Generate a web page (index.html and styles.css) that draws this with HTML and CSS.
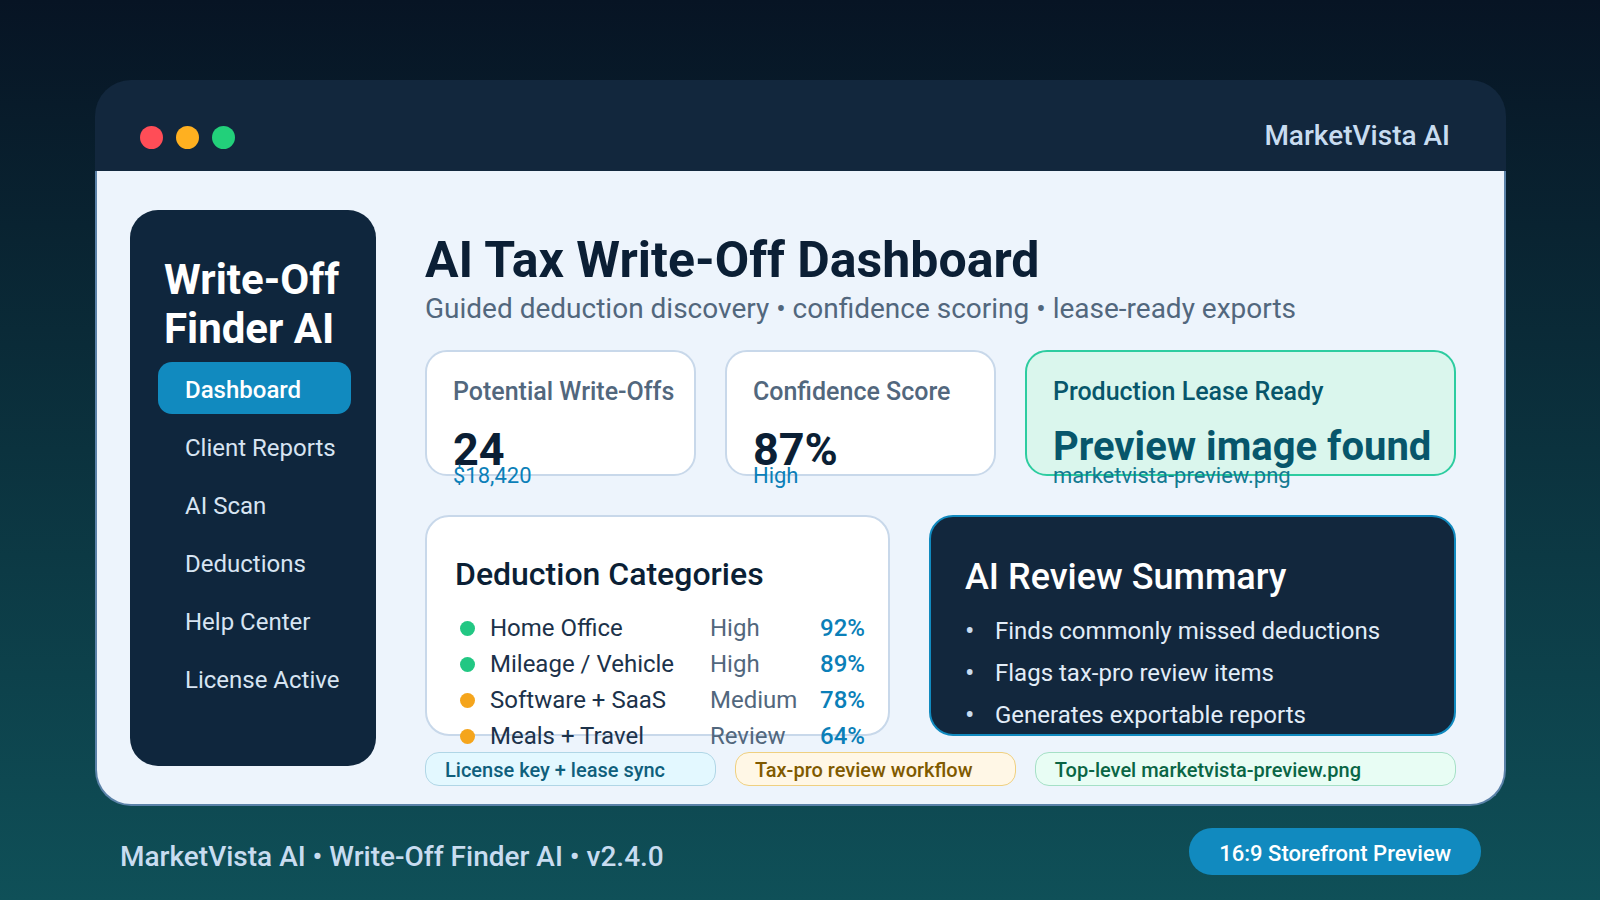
FILE: index.html
```html
<!DOCTYPE html>
<html lang="en">
<head>
    <meta charset="UTF-8">
    <meta name="viewport" content="width=device-width, initial-scale=1.0">
    <title>Write-Off Finder AI</title>
    <link rel="stylesheet" href="styles.css">
</head>
<body>
    <div class="window">
        <header class="titlebar">
            <div class="lights">
                <span class="light red"></span>
                <span class="light yellow"></span>
                <span class="light green"></span>
            </div>
            <span class="brand">MarketVista AI</span>
        </header>
        <div class="content">
            <aside class="sidebar">
                <h2>Write-Off<br>Finder AI</h2>
                <nav>
                    <a href="#" class="active">Dashboard</a>
                    <a href="#">Client Reports</a>
                    <a href="#">AI Scan</a>
                    <a href="#">Deductions</a>
                    <a href="#">Help Center</a>
                    <a href="#">License Active</a>
                </nav>
            </aside>
            <main class="main">
                <h1>AI Tax Write-Off Dashboard</h1>
                <p class="subtitle">Guided deduction discovery • confidence scoring • lease-ready exports</p>

                <section class="cards">
                    <div class="card">
                        <div class="label">Potential Write-Offs</div>
                        <div class="value">24</div>
                        <div class="note">$18,420</div>
                    </div>
                    <div class="card">
                        <div class="label">Confidence Score</div>
                        <div class="value">87%</div>
                        <div class="note">High</div>
                    </div>
                    <div class="card ready">
                        <div class="label">Production Lease Ready</div>
                        <div class="value">Preview image found</div>
                        <div class="note">marketvista-preview.png</div>
                    </div>
                </section>

                <section class="panels">
                    <div class="panel">
                        <h3>Deduction Categories</h3>
                        <table>
                            <tbody>
                                <tr>
                                    <td class="status"><span class="dot"></span></td>
                                    <td class="name">Home Office</td>
                                    <td class="level">High</td>
                                    <td class="score">92%</td>
                                </tr>
                                <tr>
                                    <td class="status"><span class="dot"></span></td>
                                    <td class="name">Mileage / Vehicle</td>
                                    <td class="level">High</td>
                                    <td class="score">89%</td>
                                </tr>
                                <tr>
                                    <td class="status"><span class="dot warn"></span></td>
                                    <td class="name">Software + SaaS</td>
                                    <td class="level">Medium</td>
                                    <td class="score">78%</td>
                                </tr>
                                <tr>
                                    <td class="status"><span class="dot warn"></span></td>
                                    <td class="name">Meals + Travel</td>
                                    <td class="level">Review</td>
                                    <td class="score">64%</td>
                                </tr>
                            </tbody>
                        </table>
                    </div>
                    <div class="panel summary">
                        <h3>AI Review Summary</h3>
                        <ul>
                            <li>Finds commonly missed deductions</li>
                            <li>Flags tax-pro review items</li>
                            <li>Generates exportable reports</li>
                        </ul>
                    </div>
                </section>

                <section class="pills">
                    <span class="pill blue">License key + lease sync</span>
                    <span class="pill amber">Tax-pro review workflow</span>
                    <span class="pill mint">Top-level marketvista-preview.png</span>
                </section>
            </main>
        </div>
    </div>
    <footer class="footer">
        <span class="version">MarketVista AI • Write-Off Finder AI • v2.4.0</span>
        <span class="badge">16:9 Storefront Preview</span>
    </footer>
</body>
</html>
```
FILE: styles.css
```css
* {
    box-sizing: border-box;
}
body {
    margin: 0;
    min-height: 100vh;
    padding: 80px 94px 25px 95px;
    font-family: Roboto, "Liberation Sans", sans-serif;
    background: linear-gradient(#071424, #0f5058);
}
h1, h2, h3, p, ul {
    margin: 0;
    padding: 0;
}

/* App window */
.titlebar {
    display: flex;
    justify-content: space-between;
    align-items: center;
    height: 91px;
    padding: 20px 56px 0 45px;
    border-radius: 36px 36px 0 0;
    background-color: #12273d;
}
.lights {
    display: flex;
    gap: 13px;
    padding-top: 4px;
}
.light {
    width: 23px;
    height: 23px;
    border-radius: 50%;
}
.red {
    background-color: #ff4d57;
}
.yellow {
    background-color: #ffb020;
}
.green {
    background-color: #22d07a;
}
.brand {
    font-size: 28px;
    font-weight: 500;
    color: #c8dcf0;
}
.content {
    display: flex;
    gap: 49px;
    padding: 39px 48px 18px 33px;
    border: 2px solid #5b82a8;
    border-top: none;
    border-radius: 0 0 36px 36px;
    background-color: #edf4fc;
}

/* Sidebar */
.sidebar {
    flex: none;
    width: 246px;
    height: 556px;
    padding: 45px 25px 0 28px;
    border-radius: 28px;
    background-color: #0f263d;
}
.sidebar h2 {
    padding-left: 6px;
    margin-bottom: 9px;
    font-size: 42px;
    line-height: 49px;
    color: #ffffff;
}
.sidebar nav {
    display: flex;
    flex-direction: column;
    gap: 6px;
}
.sidebar a {
    padding: 4px 0 0 27px;
    border-radius: 14px;
    font-size: 24px;
    line-height: 48px;
    color: #d7e4f2;
    text-decoration: none;
    white-space: nowrap;
}
.sidebar a.active {
    background-color: #118abf;
    color: #ffffff;
    font-weight: 500;
}

/* Main column */
.main {
    flex: 1;
    min-width: 0;
    padding-top: 20px;
}
.main h1 {
    font-size: 50px;
    line-height: 60px;
    color: #0b1f35;
}
.subtitle {
    font-size: 28px;
    line-height: 38px;
    color: #52677d;
}

/* Stat cards */
.cards {
    display: grid;
    grid-template-columns: 22fr 22fr 35fr;
    gap: 29px;
    margin-top: 22px;
}
.card {
    height: 126px;
    padding: 25px 0 0 26px;
    border: 2px solid #c8d8ea;
    border-radius: 22px;
    background-color: #ffffff;
    white-space: nowrap;
}
.label {
    font-size: 25px;
    font-weight: 500;
    line-height: 30px;
    color: #52677d;
}
.value {
    height: 40px;
    margin-top: 16px;
    font-size: 45px;
    font-weight: bold;
    color: #0b1f35;
}
.note {
    font-size: 22px;
    line-height: 26px;
    color: #0b7fb8;
}
.ready {
    border-color: #2dcca0;
    background-color: #daf6ed;
}
.ready .label {
    color: #07566b;
}
.ready .value {
    font-size: 40px;
    color: #07566b;
}
.ready .note {
    color: #147a91;
}

/* Panels */
.panels {
    display: grid;
    grid-template-columns: 15fr 17fr;
    gap: 39px;
    margin-top: 39px;
}
.panel {
    height: 221px;
    padding: 38px 0 0 28px;
    border: 2px solid #c8d8ea;
    border-radius: 24px;
    background-color: #ffffff;
    white-space: nowrap;
}
.panel h3 {
    height: 55px;
    font-size: 32px;
    font-weight: 500;
    color: #0b1f35;
}
table {
    border-collapse: collapse;
}
td {
    height: 36px;
    padding: 0;
    font-size: 24px;
    line-height: 36px;
}
.status {
    width: 35px;
    padding-left: 5px;
}
.dot {
    display: block;
    width: 15px;
    height: 15px;
    border-radius: 50%;
    background-color: #22c783;
}
.dot.warn {
    background-color: #f5a51c;
}
.name {
    width: 220px;
    color: #1c324a;
}
.level {
    width: 110px;
    color: #52677d;
}
.score {
    font-weight: 500;
    color: #0b7fb8;
}
.summary {
    padding-left: 34px;
    border-color: #118abf;
    background-color: #12273d;
}
.summary h3 {
    font-size: 36px;
    line-height: 44px;
    color: #ffffff;
}
.summary ul {
    list-style: none;
}
.summary li {
    display: flex;
    font-size: 24px;
    line-height: 42px;
    color: #e2edf8;
}
.summary li::before {
    content: "•";
    width: 30px;
    font-size: 28px;
    color: #c8dcf0;
}

/* Bottom pills */
.pills {
    display: grid;
    grid-template-columns: 29fr 28fr 42fr;
    gap: 19px;
    margin-top: 16px;
}
.pill {
    padding: 2px 0 0 19px;
    border: 1px solid;
    border-radius: 14px;
    font-size: 20px;
    font-weight: 500;
    line-height: 30px;
    white-space: nowrap;
}
.blue {
    border-color: #b0d6e6;
    background-color: #e3f8ff;
    color: #0f5f7c;
}
.amber {
    border-color: #efd080;
    background-color: #fff7e6;
    color: #805a00;
}
.mint {
    border-color: #a5e0c6;
    background-color: #e8fdf4;
    color: #0a6545;
}

/* Footer */
.footer {
    display: flex;
    justify-content: space-between;
    align-items: center;
    margin-top: 22px;
    padding: 0 25px;
}
.version {
    padding-top: 10px;
    font-size: 28px;
    font-weight: 500;
    color: #c8dcf0;
}
.badge {
    padding: 4px 30px 0;
    border-radius: 23px;
    background-color: #118abf;
    color: #ffffff;
    font-size: 22px;
    font-weight: 500;
    line-height: 43px;
}
```
